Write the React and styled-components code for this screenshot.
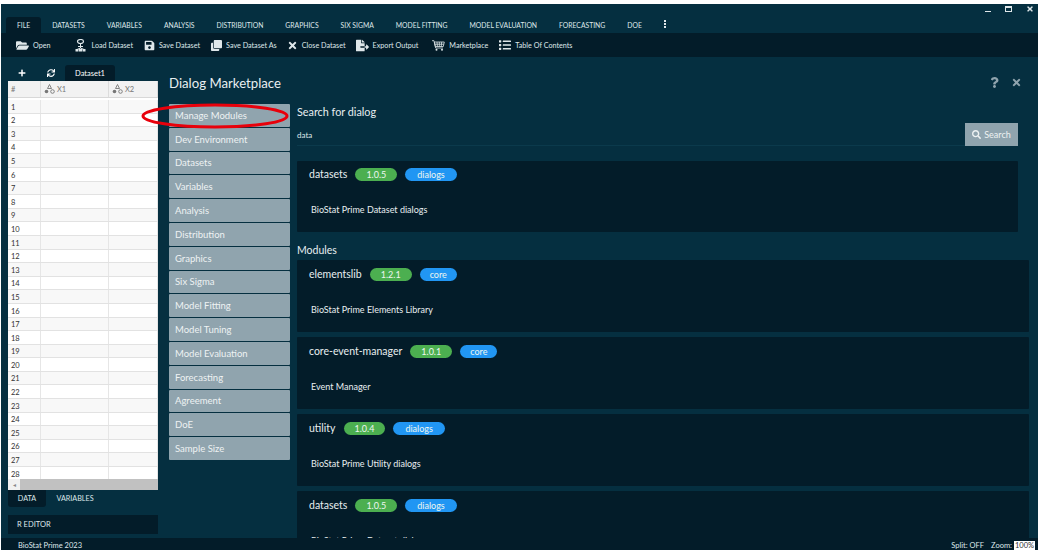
import React from "react";
import styled, { createGlobalStyle } from "styled-components";
import {
  FaFolderOpen,
  FaSave,
  FaClone,
  FaTimes,
  FaFileExport,
  FaList,
  FaPlus,
  FaSync,
  FaQuestion,
  FaSearch,
} from "react-icons/fa";

const GlobalStyle = createGlobalStyle`
  html, body {
    margin: 0;
    padding: 0;
    background: #fff;
    font-family: "Lato", "Noto Sans", sans-serif;
  }
`;

const Page = styled.div`
  width: 1038px;
  height: 550px;
  box-sizing: border-box;
  padding: 4px 0 0 1px;
  background: #fff;
  overflow: hidden;
`;

const Shell = styled.div`
  height: 546px;
  display: flex;
  flex-direction: column;
  position: relative;
  background: #052f40;
  color: #dfe7ea;
`;

const TabBar = styled.div`
  height: 29px;
  flex: none;
  display: flex;
  align-items: flex-end;
  padding-left: 5px;
`;

const Tab = styled.div`
  height: 16px;
  padding: 0 11px;
  display: flex;
  align-items: center;
  font-size: 6.8px;
  border-radius: 3px 3px 0 0;
  color: #dfe7ea;
  background: ${(p) => (p.$active ? "#031c29" : "transparent")};
`;

const MoreDots = styled.div`
  display: flex;
  flex-direction: column;
  gap: 1px;
  margin: 0 0 4px 11px;
  padding-bottom: 1px;
  span {
    width: 2px;
    height: 2px;
    background: #dfe7ea;
  }
`;

const WindowButtons = styled.div`
  margin-left: auto;
  align-self: flex-start;
  display: flex;
  align-items: center;
  gap: 14px;
  height: 9px;
  padding-right: 4px;
  color: #dfe7ea;
`;

const MinButton = styled.div`
  width: 6px;
  height: 1px;
  margin-top: 6px;
  background: #dfe7ea;
`;

const MaxButton = styled.div`
  width: 7px;
  height: 6px;
  box-sizing: border-box;
  border: 1.5px solid #dfe7ea;
  border-top-width: 2px;
`;

const Toolbar = styled.div`
  height: 24px;
  flex: none;
  display: flex;
  align-items: center;
  padding-left: 15px;
  background: #031c29;
`;

const ToolItem = styled.div`
  display: flex;
  align-items: center;
  gap: ${(p) => p.$gap || 4}px;
  margin-right: ${(p) => p.$after || 10}px;
  font-size: 7.2px;
  white-space: nowrap;
  color: #dfe7ea;
  svg {
    font-size: ${(p) => p.$icon || 11}px;
    flex: none;
  }
`;

const Body = styled.div`
  flex: 1;
  min-height: 0;
  display: flex;
`;

const LeftPane = styled.div`
  width: 150px;
  flex: none;
  margin-left: 7px;
  display: flex;
  flex-direction: column;
`;

const SheetTabs = styled.div`
  height: 24px;
  flex: none;
  display: flex;
  align-items: flex-end;
  color: #fff;
`;

const SheetAction = styled.div`
  width: ${(p) => p.$w}px;
  height: 16px;
  display: flex;
  align-items: center;
  justify-content: center;
  font-size: 8px;
  flex: none;
`;

const SheetTab = styled.div`
  width: 50px;
  height: 16px;
  display: flex;
  align-items: center;
  justify-content: center;
  font-size: 7.5px;
  background: #031c29;
  border-radius: 3px 3px 0 0;
`;

const Grid = styled.div`
  height: 409px;
  flex: none;
  background: #fff;
  color: #333;
  display: flex;
  flex-direction: column;
  overflow: hidden;
`;

const HeadRow = styled.div`
  height: 17px;
  flex: none;
  display: grid;
  grid-template-columns: 33px 68px 49px;
  background: #f2f2f2;
  border-bottom: 1px solid #d8d8d8;
  box-sizing: border-box;
  margin-bottom: 2px;
`;

const HeadCell = styled.div`
  display: flex;
  align-items: center;
  gap: 2px;
  padding-left: 3px;
  font-size: 7.5px;
  color: #777;
  border-right: 1px solid #dcdcdc;
`;

const Rows = styled.div`
  flex: 1;
  min-height: 0;
  overflow: hidden;
`;

const Row = styled.div`
  height: 13.6px;
  display: grid;
  grid-template-columns: 33px 68px 49px;
  box-sizing: border-box;
  border-bottom: 1px solid #e2e2e2;
  background: ${(p) => (p.$odd ? "#f8f8f8" : "#fff")};
`;

const Cell = styled.div`
  display: flex;
  align-items: flex-end;
  padding-left: 3px;
  font-size: 7.5px;
  line-height: 10px;
  color: #333;
  border-right: 1px solid #e6e6e6;
`;

const HScroll = styled.div`
  height: 11px;
  flex: none;
  display: flex;
  align-items: center;
  background: #f1f1f1;
  font-size: 6px;
  color: #888;
`;

const ScrollArrow = styled.div`
  width: 12px;
  text-align: center;
`;

const ScrollThumb = styled.div`
  flex: 1;
  height: 100%;
  background: #c1c1c1;
`;

const PaneTabs = styled.div`
  height: 17px;
  flex: none;
  display: flex;
`;

const PaneTab = styled.div`
  width: ${(p) => p.$w}px;
  display: flex;
  align-items: center;
  justify-content: center;
  font-size: 7.2px;
  color: #dfe7ea;
  border-radius: 0 0 3px 3px;
  background: ${(p) => (p.$active ? "#031c29" : "transparent")};
`;

const EditorBar = styled.div`
  height: 19px;
  flex: none;
  margin-top: 8px;
  padding-left: 9px;
  display: flex;
  align-items: center;
  font-size: 7.5px;
  color: #dfe7ea;
  background: #031c29;
`;

const Market = styled.div`
  flex: 1;
  min-width: 0;
  display: flex;
  flex-direction: column;
  padding-left: 11px;
`;

const MarketHead = styled.div`
  height: 47px;
  flex: none;
  display: flex;
  align-items: center;
  padding-top: 4px;
  box-sizing: border-box;
`;

const MarketTitle = styled.h1`
  margin: 0;
  font-size: 13.2px;
  font-weight: 400;
  color: #e8eef0;
`;

const MarketActions = styled.div`
  margin-left: auto;
  margin-right: 16px;
  display: flex;
  align-items: center;
  gap: 11px;
  color: #8fa3ad;
  font-size: 11px;
`;

const MarketBody = styled.div`
  flex: 1;
  min-height: 0;
  display: flex;
  gap: 7px;
`;

const SideMenu = styled.div`
  width: 121px;
  flex: none;
  display: flex;
  flex-direction: column;
  gap: 1px;
`;

const MenuItem = styled.div`
  height: 22.8px;
  flex: none;
  box-sizing: border-box;
  padding-left: 6px;
  display: flex;
  align-items: center;
  font-size: 9.5px;
  color: #eef2f3;
  background: #90a4ae;
  border-radius: 1px;
`;

const Content = styled.div`
  flex: 1;
  min-width: 0;
  padding-right: 9px;
  display: flex;
  flex-direction: column;
`;

const SearchSection = styled.div`
  padding-right: 11px;
`;

const SearchLabel = styled.div`
  font-size: 10.8px;
  line-height: 14px;
  margin-top: 1px;
  color: #e8eef0;
`;

const SearchRow = styled.div`
  display: flex;
  align-items: flex-end;
  margin-top: 4px;
`;

const SearchInput = styled.div`
  flex: 1;
  height: 22px;
  box-sizing: border-box;
  display: flex;
  align-items: center;
  font-size: 8px;
  color: #dfe7ea;
  border-bottom: 1px solid #0b3a4c;
`;

const SearchButton = styled.div`
  width: 53px;
  height: 23px;
  display: flex;
  align-items: center;
  justify-content: center;
  gap: 3px;
  font-size: 9px;
  color: #eef2f3;
  background: #90a4ae;
  svg {
    font-size: 9px;
  }
`;

const ResultCard = styled.div`
  height: ${(p) => p.$h || 72}px;
  flex: none;
  box-sizing: border-box;
  margin-top: ${(p) => p.$top}px;
  padding: ${(p) => (p.$found ? 6 : 7)}px 12px 0;
  background: #031c29;
  border-radius: 1px;
`;

const CardHead = styled.div`
  display: flex;
  align-items: center;
  gap: 8px;
  height: 14px;
`;

const CardName = styled.div`
  font-size: 10.5px;
  color: #e8eef0;
`;

const Pill = styled.div`
  height: 13px;
  padding: 0 ${(p) => p.$px || 11}px;
  display: flex;
  align-items: center;
  font-size: 9px;
  color: #eef6f0;
  border-radius: 7px;
  background: ${(p) => (p.$kind === "version" ? "#4caf50" : "#2196f3")};
`;

const CardText = styled.div`
  margin: ${(p) => (p.$found ? 23 : 22.5)}px 0 0 2px;
  font-size: 9px;
  line-height: 12px;
  color: #e8eef0;
`;

const SectionLabel = styled.div`
  margin-top: 11px;
  font-size: 10.5px;
  line-height: 14px;
  color: #e8eef0;
`;

const StatusBar = styled.div`
  height: 12px;
  flex: none;
  margin-top: 2px;
  padding: 2px 3px 0 17px;
  box-sizing: border-box;
  display: flex;
  align-items: flex-start;
  font-size: 7.5px;
  line-height: 12px;
  color: #dfe7ea;
  background: #031c29;
  position: relative;
  overflow: hidden;
`;

const StatusRight = styled.div`
  margin-left: auto;
  display: flex;
  gap: 7px;
`;

const ZoomValue = styled.span`
  background: #fff;
  color: #333;
  padding: 0 1px;
  margin-left: 2px;
`;

const Highlight = styled.svg`
  position: absolute;
  left: 140px;
  top: 99px;
  width: 150px;
  height: 26px;
  pointer-events: none;
`;

const tabs = [
  "DATASETS",
  "VARIABLES",
  "ANALYSIS",
  "DISTRIBUTION",
  "GRAPHICS",
  "SIX SIGMA",
  "MODEL FITTING",
  "MODEL EVALUATION",
  "FORECASTING",
  "DOE",
];

const menu = [
  "Manage Modules",
  "Dev Environment",
  "Datasets",
  "Variables",
  "Analysis",
  "Distribution",
  "Graphics",
  "Six Sigma",
  "Model Fitting",
  "Model Tuning",
  "Model Evaluation",
  "Forecasting",
  "Agreement",
  "DoE",
  "Sample Size",
];

const modules = [
  { name: "elementslib", version: "1.2.1", tag: "core", text: "BioStat Prime Elements Library", top: 3 },
  { name: "core-event-manager", version: "1.0.1", tag: "core", text: "Event Manager", top: 5 },
  { name: "utility", version: "1.0.4", tag: "dialogs", text: "BioStat Prime Utility dialogs", top: 5 },
  { name: "datasets", version: "1.0.5", tag: "dialogs", text: "BioStat Prime Dataset dialogs", top: 5 },
];

const LoadIcon = () => (
  <svg width="11" height="13" viewBox="0 0 11 13" fill="none" stroke="currentColor">
    <ellipse cx="5.5" cy="2.5" rx="3" ry="2" strokeWidth="1.2" />
    <path d="M5.5 4.5V9M3 7.5h5M5.5 9L2 10.5M5.5 9L9 10.5" strokeWidth="1" />
    <rect x="0.5" y="10" width="3" height="2.5" fill="currentColor" stroke="none" />
    <rect x="4" y="10" width="3" height="2.5" fill="currentColor" stroke="none" />
    <rect x="7.5" y="10" width="3" height="2.5" fill="currentColor" stroke="none" />
  </svg>
);

const CartIcon = () => (
  <svg width="13" height="11" viewBox="0 0 13 11" fill="none" stroke="currentColor" strokeWidth="0.8">
    <path d="M0 0.7h2l1.6 7.3h7.4" />
    <path d="M2.3 2h10l-1 4.5H3.3z" />
    <path d="M5 2l.4 4.5M7.3 2v4.5M9.7 2l-.5 4.5M2.7 4.2h9.1" />
    <circle cx="4.5" cy="9.7" r="1" fill="currentColor" stroke="none" />
    <circle cx="10" cy="9.7" r="1" fill="currentColor" stroke="none" />
  </svg>
);

const NominalIcon = () => (
  <svg width="11" height="10" viewBox="0 0 11 10" fill="#777">
    <path d="M5.5 0.5L7.5 4.5H3.5z" fill="none" stroke="#777" strokeWidth="0.9" />
    <circle cx="2.5" cy="7.5" r="1.8" />
    <circle cx="8.5" cy="7.5" r="1.8" fill="none" stroke="#777" strokeWidth="0.9" />
  </svg>
);

const ModuleCard = ({ name, version, tag, text, top, h, found }) => (
  <ResultCard $top={top} $h={h} $found={found}>
    <CardHead>
      <CardName>{name}</CardName>
      <Pill $kind="version">{version}</Pill>
      <Pill $px={tag === "core" ? 10 : 12}>{tag}</Pill>
    </CardHead>
    <CardText $found={found}>{text}</CardText>
  </ResultCard>
);

export default function App() {
  return (
    <Page>
      <GlobalStyle />
      <Shell>
        <TabBar>
          <Tab $active>FILE</Tab>
          {tabs.map((t) => (
            <Tab key={t}>{t}</Tab>
          ))}
          <MoreDots>
            <span />
            <span />
            <span />
          </MoreDots>
          <WindowButtons>
            <MinButton />
            <MaxButton />
            <FaTimes size={8} />
          </WindowButtons>
        </TabBar>

        <Toolbar>
          <ToolItem $icon={13} $after={24}><FaFolderOpen />Open</ToolItem>
          <ToolItem $gap={6} $after={11}><LoadIcon />Load Dataset</ToolItem>
          <ToolItem $after={11}><FaSave />Save Dataset</ToolItem>
          <ToolItem><FaClone />Save Dataset As</ToolItem>
          <ToolItem><FaTimes />Close Dataset</ToolItem>
          <ToolItem $icon={13} $after={14}><FaFileExport />Export Output</ToolItem>
          <ToolItem $after={11}><CartIcon />Marketplace</ToolItem>
          <ToolItem $icon={12}><FaList />Table Of Contents</ToolItem>
        </Toolbar>

        <Body>
          <LeftPane>
            <SheetTabs>
              <SheetAction $w={28}><FaPlus /></SheetAction>
              <SheetAction $w={29}><FaSync /></SheetAction>
              <SheetTab>Dataset1</SheetTab>
            </SheetTabs>
            <Grid>
              <HeadRow>
                <HeadCell>#</HeadCell>
                <HeadCell><NominalIcon />X1</HeadCell>
                <HeadCell><NominalIcon />X2</HeadCell>
              </HeadRow>
              <Rows>
                {Array.from({ length: 28 }, (_, i) => (
                  <Row key={i} $odd={i % 2 === 0}>
                    <Cell>{i + 1}</Cell>
                    <Cell />
                    <Cell />
                  </Row>
                ))}
              </Rows>
              <HScroll>
                <ScrollArrow>◂</ScrollArrow>
                <ScrollThumb />
              </HScroll>
            </Grid>
            <PaneTabs>
              <PaneTab $active $w={38}>DATA</PaneTab>
              <PaneTab $w={58}>VARIABLES</PaneTab>
            </PaneTabs>
            <EditorBar>R EDITOR</EditorBar>
          </LeftPane>

          <Market>
            <MarketHead>
              <MarketTitle>Dialog Marketplace</MarketTitle>
              <MarketActions>
                <FaQuestion />
                <FaTimes />
              </MarketActions>
            </MarketHead>
            <MarketBody>
              <SideMenu>
                {menu.map((m) => (
                  <MenuItem key={m}>{m}</MenuItem>
                ))}
              </SideMenu>
              <Content>
                <SearchSection>
                  <SearchLabel>Search for dialog</SearchLabel>
                  <SearchRow>
                    <SearchInput>data</SearchInput>
                    <SearchButton><FaSearch />Search</SearchButton>
                  </SearchRow>
                  <ModuleCard
                    found
                    name="datasets"
                    version="1.0.5"
                    tag="dialogs"
                    text="BioStat Prime Dataset dialogs"
                    top={15}
                    h={71}
                  />
                </SearchSection>
                <SectionLabel>Modules</SectionLabel>
                {modules.map((m) => (
                  <ModuleCard key={m.name} {...m} />
                ))}
              </Content>
            </MarketBody>
          </Market>
        </Body>

        <StatusBar>
          BioStat Prime 2023
          <StatusRight>
            <span>Split: OFF</span>
            <span>Zoom:<ZoomValue>100%</ZoomValue></span>
          </StatusRight>
        </StatusBar>

        <Highlight viewBox="0 0 150 26">
          <ellipse cx="74" cy="13" rx="72" ry="11" fill="none" stroke="#e8000b" strokeWidth="3" />
        </Highlight>
      </Shell>
    </Page>
  );
}
